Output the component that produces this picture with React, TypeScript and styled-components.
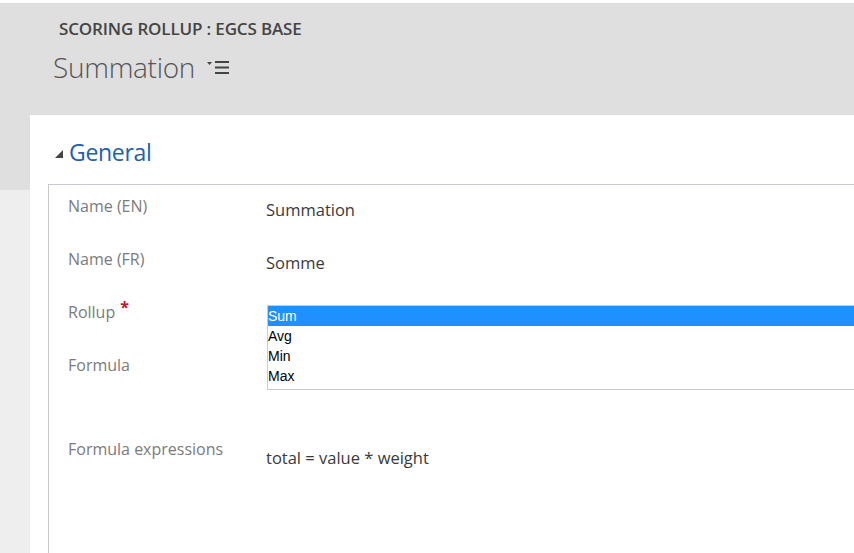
import React from "react";
import styled, { createGlobalStyle } from "styled-components";

const Global = createGlobalStyle`
  html, body { margin: 0; padding: 0; background: #ffffff; }
  body { font-family: "Open Sans", "Noto Sans", sans-serif; overflow: hidden; }
  * { box-sizing: border-box; }
`;

const Page = styled.div`
  width: 854px;
  height: 553px;
  display: flex;
  flex-direction: column;
  padding-top: 3px;
  background: #ffffff;
`;

const Header = styled.header`
  background: #dfdfdf;
  height: 112px;
  padding: 14px 0 0 59px;
  display: flex;
  flex-direction: column;
`;

const EntityTitle = styled.div`
  font-size: 17px;
  font-weight: 600;
  color: #444444;
  line-height: 24px;
  letter-spacing: -0.15px;
`;

const RecordRow = styled.div`
  display: flex;
  align-items: center;
  gap: 12px;
  margin-left: -6px;
  margin-top: 7px;
`;

const RecordName = styled.div`
  font-size: 28px;
  font-weight: 300;
  color: #555555;
  line-height: 38px;
  letter-spacing: -0.3px;
`;

const MenuIcon = styled.svg`
  width: 22px;
  height: 16px;
  margin-top: 2px;
`;

const Body = styled.div`
  flex: 1;
  display: flex;
  background: linear-gradient(#dfdfdf 75px, #eeeeee 75px);
`;

const Gutter = styled.div`
  width: 30px;
  flex: none;
`;

const Panel = styled.main`
  flex: 1;
  background: #ffffff;
  padding-top: 20px;
  display: flex;
  flex-direction: column;
`;

const SectionHeader = styled.div`
  display: flex;
  align-items: center;
  gap: 6px;
  padding-left: 25px;
  height: 34px;
`;

const Triangle = styled.svg`
  width: 8px;
  height: 8px;
  margin-top: 4px;
`;

const SectionTitle = styled.h2`
  margin: 0;
  font-size: 23px;
  font-weight: 400;
  color: #2160b0;
  line-height: 34px;
  letter-spacing: -0.3px;
`;

const SectionBox = styled.section`
  margin-top: 15px;
  margin-left: 18px;
  flex: 1;
  border-top: 1px solid #c2c8ce;
  border-left: 1px solid #c8c8c8;
  display: grid;
  grid-template-columns: 198px 1fr;
  grid-template-rows: 53px 53px 53px 84px auto;
  padding-left: 19px;
`;

const Label = styled.div`
  font-size: 16px;
  color: #7b7b7b;
  line-height: 22px;
  padding-top: 10px;
`;

const Required = styled.span`
  color: #c0182a;
  font-weight: 700;
  margin-left: 5px;
  position: relative;
  top: -5px;
`;

const Value = styled.div<{ $offset?: number }>`
  font-size: 16.5px;
  color: #3a3a3a;
  line-height: 22px;
  padding-top: ${(p) => p.$offset ?? 14}px;
`;

const ListCell = styled.div`
  grid-row: span 2;
  padding-top: 14px;
  padding-left: 1px;
`;

const ListBox = styled.ul`
  list-style: none;
  margin: 0;
  padding: 0 0 3px 0;
  border: 1px solid #cccccc;
  border-right: none;
  height: 85px;
  font-family: "Liberation Sans", Arial, sans-serif;
  font-size: 14px;
`;

const Option = styled.li<{ $selected?: boolean }>`
  height: 20px;
  line-height: 20px;
  padding-left: 0;
  color: ${(p) => (p.$selected ? "#ffffff" : "#000000")};
  background: ${(p) => (p.$selected ? "#1e90ff" : "transparent")};
`;

const options = ["Sum", "Avg", "Min", "Max"];

export default function App() {
  return (
    <>
      <Global />
      <Page>
        <Header>
          <EntityTitle>SCORING ROLLUP : EGCS BASE</EntityTitle>
          <RecordRow>
            <RecordName>Summation</RecordName>
            <MenuIcon viewBox="0 0 22 16">
              <polygon points="0,2 5,2 2.5,5" fill="#444" />
              <rect x="8" y="1" width="14" height="2" fill="#444" />
              <rect x="8" y="6.5" width="14" height="2" fill="#444" />
              <rect x="8" y="12" width="14" height="2" fill="#444" />
            </MenuIcon>
          </RecordRow>
        </Header>
        <Body>
          <Gutter />
          <Panel>
            <SectionHeader>
              <Triangle viewBox="0 0 8 8">
                <polygon points="8,0 8,8 0,8" fill="#444" />
              </Triangle>
              <SectionTitle>General</SectionTitle>
            </SectionHeader>
            <SectionBox>
              <Label>Name (EN)</Label>
              <Value>Summation</Value>
              <Label>Name (FR)</Label>
              <Value>Somme</Value>
              <Label>
                Rollup<Required>*</Required>
              </Label>
              <ListCell>
                <ListBox>
                  {options.map((o, i) => (
                    <Option key={o} $selected={i === 0}>
                      {o}
                    </Option>
                  ))}
                </ListBox>
              </ListCell>
              <Label>Formula</Label>
              <Label>Formula expressions</Label>
              <Value $offset={19}>total = value * weight</Value>
            </SectionBox>
          </Panel>
        </Body>
      </Page>
    </>
  );
}
